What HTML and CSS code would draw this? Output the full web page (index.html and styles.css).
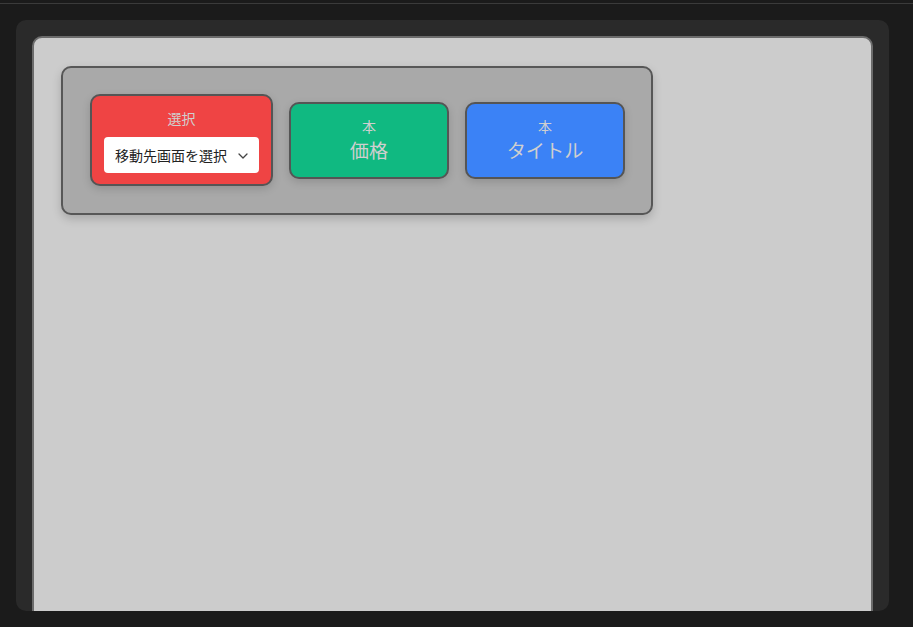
FILE: index.html
```html
<!DOCTYPE html>
<html lang="ja">
<head>
<meta charset="utf-8">
<title>画面遷移</title>
<link rel="stylesheet" href="styles.css">
</head>
<body>
<div class="topbar"></div>
<main class="frame">
  <section class="canvas">
    <div class="group">
      <div class="node node-red">
        <div class="node-label">選択</div>
        <label class="picker">
          <span class="picker-text">移動先画面を選択</span>
          <svg class="chevron" width="10" height="6" viewBox="0 0 10 6" aria-hidden="true">
            <path d="M1 1l4 4 4-4" fill="none" stroke="#444" stroke-width="1.3" stroke-linecap="round" stroke-linejoin="round"/>
          </svg>
        </label>
      </div>
      <div class="node node-green">
        <div class="node-sub">本</div>
        <div class="node-title">価格</div>
      </div>
      <div class="node node-blue">
        <div class="node-sub">本</div>
        <div class="node-title">タイトル</div>
      </div>
    </div>
  </section>
</main>
</body>
</html>
```
FILE: styles.css
```css
* { box-sizing: border-box; }

html, body {
  margin: 0;
  height: 100%;
}

body {
  background: #1b1b1b;
  font-family: "Noto Sans CJK JP", "Noto Sans", sans-serif;
  padding: 3px 24px 16px 16px;
  display: flex;
  flex-direction: column;
  overflow: hidden;
}

.topbar {
  height: 1px;
  background: #3b3b3b;
  margin: 0 -24px 16px -16px;
  flex: none;
}

.frame {
  flex: 1;
  background: #2a2a2a;
  border-radius: 10px;
  padding: 16px 16px 0;
  overflow: hidden;
}

.canvas {
  height: 620px;
  background: #cccccc;
  border: 2px solid #6b6b6b;
  border-radius: 10px;
  padding: 28px 28px 28px 27px;
}

.group {
  display: inline-flex;
  align-items: center;
  gap: 16px;
  background: #a9a9a9;
  border: 2px solid #575757;
  border-radius: 10px;
  padding: 26px 26px 27px 27px;
  box-shadow: 0 4px 10px rgba(0, 0, 0, 0.18);
}

.node {
  border: 2px solid #555555;
  border-radius: 10px;
  color: #cfcfcf;
  text-align: center;
  box-shadow: 0 3px 8px rgba(0, 0, 0, 0.15);
}

.node-red {
  background: #ef4444;
  padding: 12px 12px 11px;
}

.node-green,
.node-blue {
  width: 160px;
  height: 77px;
  display: flex;
  flex-direction: column;
  justify-content: center;
}

.node-green { background: #10b981; }
.node-blue { background: #3b82f6; }

.node-label {
  font-size: 14px;
  line-height: 20px;
  margin-bottom: 9px;
}

.node-sub {
  font-size: 14px;
  line-height: 20px;
}

.node-title {
  font-size: 19.2px;
  line-height: 29px;
}

.picker {
  display: flex;
  align-items: center;
  justify-content: space-between;
  width: 155px;
  height: 36px;
  background: #ffffff;
  border-radius: 4px;
  padding: 0 11px;
  color: #222222;
  font-size: 14px;
}

.chevron { flex: none; margin-top: 1px; }
```
